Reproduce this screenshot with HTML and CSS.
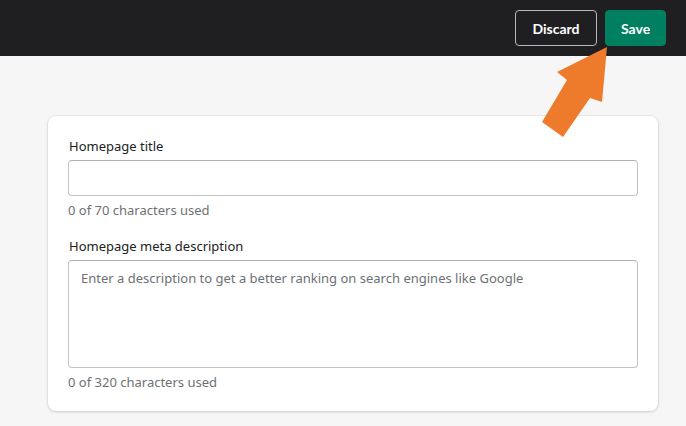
FILE: index.html
```html
<!DOCTYPE html>
<html lang="en">
<head>
<meta charset="utf-8">
<title>Homepage SEO</title>
<link rel="stylesheet" href="styles.css">
</head>
<body>
<header class="topbar">
  <button class="btn btn-discard">Discard</button>
  <button class="btn btn-save">Save</button>
</header>
<main class="page">
  <section class="card">
    <div class="field">
      <label class="label">Homepage title</label>
      <div class="input"></div>
      <p class="help">0 of 70 characters used</p>
    </div>
    <div class="field">
      <label class="label">Homepage meta description</label>
      <div class="input textarea">Enter a description to get a better ranking on search engines like Google</div>
      <p class="help">0 of 320 characters used</p>
    </div>
  </section>
</main>
<svg class="arrow" width="80" height="100" viewBox="530 40 80 100">
  <polygon points="607,47 602,102 590,98 563,137 542,122 567,80 557,72" fill="#ee7b2c"/>
</svg>
</body>
</html>
```
FILE: styles.css
```css
* { box-sizing: border-box; }
html, body { margin: 0; padding: 0; }
body {
  background: #f6f6f7;
  font-family: "Noto Sans", "Open Sans", sans-serif;
  width: 686px;
  height: 426px;
  overflow: hidden;
  position: relative;
}
.topbar {
  height: 56px;
  background: #1f1f22;
  display: flex;
  justify-content: flex-end;
  align-items: flex-start;
  gap: 8px;
  padding: 10px 20px 0 0;
}
.btn {
  height: 36px;
  border-radius: 4px;
  font-family: Lato, "Noto Sans", sans-serif;
  font-weight: 700;
  font-size: 14px;
  color: #fff;
  padding: 0 15px;
}
.btn-discard {
  background: #1f1f22;
  border: 1px solid #b9b9bc;
  width: 82px;
}
.btn-save {
  background: #008060;
  border: 1px solid #008060;
  width: 61px;
}
.page {
  padding: 60px 28px 0 48px;
}
.card {
  background: #fff;
  border-radius: 8px;
  box-shadow: 0 0 0 1px rgba(63,63,68,0.05), 0 1px 3px rgba(63,63,68,0.18);
  padding: 20px 20px 20px 20px;
  width: 610px;
  height: 295px;
}
.field + .field { margin-top: 16px; }
.label {
  display: block;
  font-size: 13px;
  color: #202223;
  line-height: 20px;
  margin-bottom: 4px;
  padding-left: 1px;
}
.input {
  height: 36px;
  border: 1px solid #c4c4c7;
  border-top-color: #aeb4b9;
  border-radius: 4px;
  background: #fff;
}
.textarea {
  height: 108px;
  padding: 7px 12px;
  font-size: 13px;
  color: #6d7175;
  line-height: 20px;
}
.help {
  margin: 4px 0 0 0;
  font-size: 13px;
  line-height: 20px;
  color: #6d7175;
}
.arrow {
  position: absolute;
  left: 530px;
  top: 40px;
}
```
